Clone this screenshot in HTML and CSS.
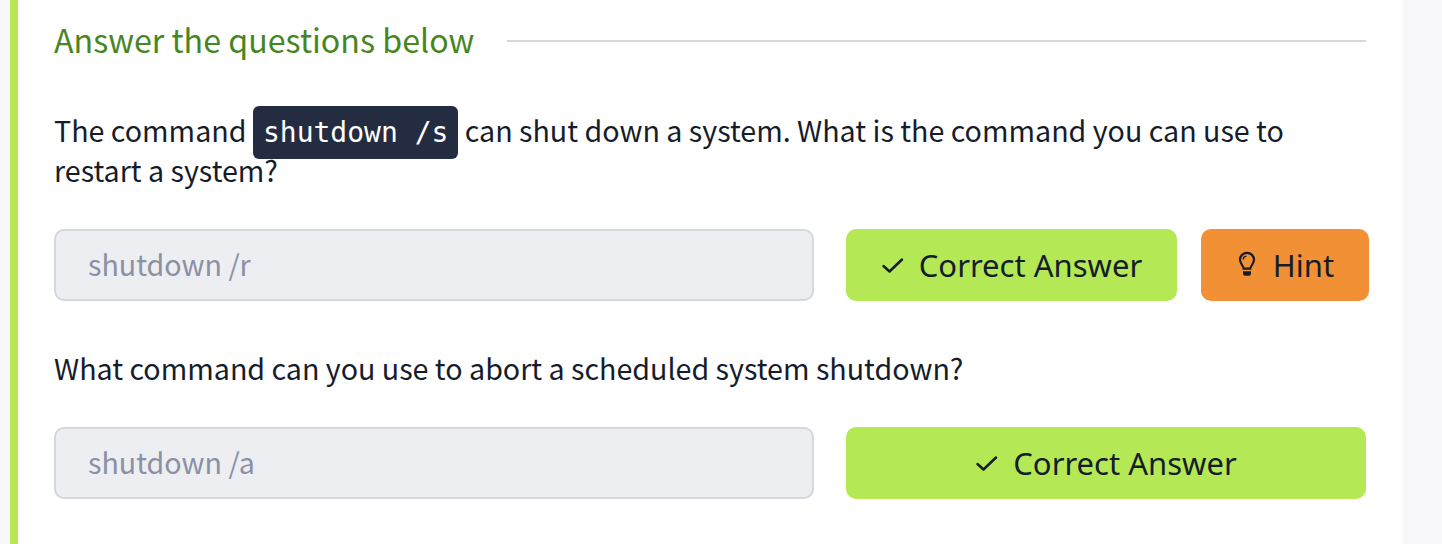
FILE: index.html
```html
<!DOCTYPE html>
<html lang="en">
<head>
<meta charset="utf-8">
<title>Questions</title>
<link rel="stylesheet" href="styles.css">
</head>
<body>
<main class="card">
  <header class="heading">
    <h2 class="title">Answer the questions below</h2>
    <span class="rule"></span>
  </header>
  <section class="question">
    <p class="prompt">The command <code class="code">shutdown /s</code> can shut down a system. What is the command you can use to<br>restart a system?</p>
    <div class="row">
      <div class="answer">shutdown /r</div>
      <button class="btn correct">
        <svg class="check" viewBox="0 0 24 18"><path d="M2.500 10 8.500 15.500 21 3.500"/></svg>
        <span>Correct Answer</span>
      </button>
      <button class="btn hint">
        <svg class="bulb" viewBox="0 0 18 26"><path class="line" d="M5.7 17.700C5.4 14.600 2 12.800 2 8.800a7 7 0 0 1 14 0c0 4-3.400 5.800-3.700 8.900z"/><path class="line thin" d="M5.200 8.600c0-2 1.200-3.300 3.200-3.500"/><path d="M5 20.300h8v2a2.500 2.500 0 0 1-2.500 2.500h-3A2.500 2.500 0 0 1 5 22.300z"/></svg>
        <span>Hint</span>
      </button>
    </div>
  </section>
  <section class="question second">
    <p class="prompt">What command can you use to abort a scheduled system shutdown?</p>
    <div class="row">
      <div class="answer">shutdown /a</div>
      <button class="btn correct wide">
        <svg class="check" viewBox="0 0 24 18"><path d="M2.500 10 8.500 15.500 21 3.500"/></svg>
        <span>Correct Answer</span>
      </button>
    </div>
  </section>
</main>
</body>
</html>
```
FILE: styles.css
```css
* { box-sizing: border-box; }
body {
  margin: 0;
  height: 544px;
  overflow: hidden;
  background: #f8f8fb;
  color: #151c2b;
  font-family: "Noto Sans CJK SC", "Noto Sans", sans-serif;
}
.card {
  width: 1392px;
  height: 544px;
  margin-left: 10px;
  padding: 16px 33px 0 36px;
  border-left: 8px solid #b4e854;
  background: #fff;
}
.heading {
  display: flex;
  align-items: center;
  height: 50px;
}
.title {
  width: 453px;
  margin: 0;
  padding-bottom: 4px;
  color: #47861f;
  font-size: 32.2px;
  font-weight: 400;
  line-height: 46px;
  white-space: nowrap;
}
.rule {
  width: 859px;
  height: 2px;
  background: #d5d8dc;
}
.question { padding-top: 44px; }
.second { padding-top: 47px; }
.prompt {
  margin: 0;
  font-size: 28.65px;
  line-height: 40px;
  white-space: nowrap;
}
.code {
  padding: 10px;
  border-radius: 6px;
  background: #242c42;
  color: #fff;
  font: 28px/1 "DejaVu Sans Mono", monospace;
}
.row {
  display: flex;
  margin-top: 39px;
}
.answer {
  width: 760px;
  height: 72px;
  margin-right: 32px;
  padding: 0 32px;
  border: 2px solid #d5d7de;
  border-radius: 10px;
  background: #edeef2;
  color: #8b90a4;
  font-size: 28.65px;
  line-height: 66px;
}
.btn {
  display: flex;
  align-items: center;
  justify-content: center;
  height: 72px;
  padding: 0;
  border: 0;
  border-radius: 10px;
  color: #151c2b;
  font: 31px/72px "Noto Sans", sans-serif;
}
.correct { width: 331px; background: #b4e854; }
.wide { width: 520px; }
.hint { width: 168px; margin-left: 24px; background: #f29036; }
.check {
  width: 24px;
  height: 18px;
  margin-right: 14px;
  fill: none;
  stroke: #151c2b;
  stroke-width: 2.5;
  stroke-linecap: round;
  stroke-linejoin: round;
}
.bulb {
  width: 18px;
  height: 26px;
  margin: 0 17px 2px 2px;
  fill: #151c2b;
}
.line { fill: none; stroke: #151c2b; stroke-width: 2.2; }
.thin { stroke-width: 1.4; }
```
